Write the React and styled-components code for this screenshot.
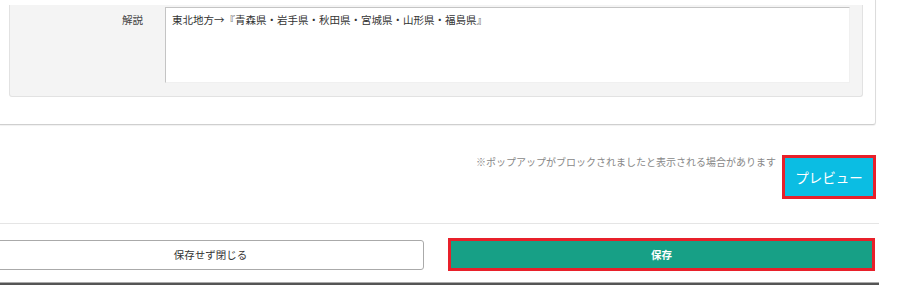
import React from 'react'
import styled, { createGlobalStyle } from 'styled-components'

const GlobalStyle = createGlobalStyle`
  body {
    margin: 0;
    background: #fff;
    font-family: "Noto Sans CJK JP", "Noto Sans", sans-serif;
    color: #333;
    overflow: hidden;
  }
`

const App = () => {
  return (
    <Page>
      <GlobalStyle />
      <Card>
        <Panel>
          <Label>解説</Label>
          <TextArea
            readOnly
            defaultValue="東北地方→『青森県・岩手県・秋田県・宮城県・山形県・福島県』"
          />
        </Panel>
      </Card>
      <PreviewRow>
        <Note>※ポップアップがブロックされましたと表示される場合があります</Note>
        <PreviewButton>プレビュー</PreviewButton>
      </PreviewRow>
      <Divider />
      <Footer>
        <CloseButton>保存せず閉じる</CloseButton>
        <SaveButton>保存</SaveButton>
      </Footer>
      <BottomLine />
    </Page>
  )
}

export default App

/* STYLES */

const Page = styled.div`
  width: 878px;
`
const Card = styled.div`
  width: 876px;
  box-sizing: border-box;
  padding: 5px 12px 27px 9px;
  border-right: 1px solid #dcdcdc;
  border-bottom: 1px solid #cfcfcf;
  border-bottom-right-radius: 3px;
  box-shadow: 0 1px 1px rgba(0, 0, 0, 0.06);
`
const Panel = styled.div`
  display: grid;
  grid-template-columns: 155px 1fr;
  padding: 2px 12px 13px 0;
  background: #f4f4f4;
  border: 1px solid #e2e2e2;
  border-top: none;
  border-radius: 0 0 3px 3px;
`
const Label = styled.div`
  font-size: 10.5px;
  line-height: 15px;
  text-align: right;
  padding: 5px 22px 0 0;
  color: #444;
`
const TextArea = styled.textarea`
  display: block;
  height: 76px;
  box-sizing: border-box;
  width: 100%;
  margin: 0;
  padding: 4px 6px;
  resize: none;
  outline: none;
  font-family: inherit;
  font-size: 10.5px;
  line-height: 16px;
  color: #333;
  background: #fff;
  border: 1px solid #f0f0f0;
  border-top-color: #c4c4c4;
  border-left-color: #c4c4c4;
`
const PreviewRow = styled.div`
  display: flex;
  justify-content: flex-end;
  align-items: flex-start;
  gap: 6px;
  margin-top: 30px;
  padding-right: 2px;
`
const Note = styled.span`
  font-size: 10px;
  line-height: 13px;
  margin-top: 0px;
  color: #888;
`
const PreviewButton = styled.button`
  width: 94px;
  height: 44px;
  box-sizing: border-box;
  margin: 0;
  padding: 0;
  background: #0bbde3;
  border: 3px solid #e8202a;
  color: #fff;
  font-family: inherit;
  font-size: 13.5px;
`
const Divider = styled.div`
  margin-top: 24px;
  width: 879px;
  height: 1px;
  background: #e5e5e5;
`
const Footer = styled.div`
  display: grid;
  grid-template-columns: 427px 427px;
  gap: 24px;
  align-items: center;
  margin-left: -3px;
  padding-top: 14px;
`
const CloseButton = styled.button`
  height: 30px;
  margin: 0;
  background: #fff;
  border: 1px solid #aaa;
  border-radius: 3px;
  color: #333;
  font-family: inherit;
  font-size: 10.5px;
`
const SaveButton = styled.button`
  height: 33px;
  margin: 0;
  box-sizing: border-box;
  background: #17a086;
  border: 3px solid #e8202a;
  color: #fff;
  font-family: inherit;
  font-size: 10.5px;
  font-weight: bold;
`
const BottomLine = styled.div`
  margin-top: 11px;
  width: 879px;
  height: 2px;
  background: #555;
  border-top: 1px solid #aaa;
`
